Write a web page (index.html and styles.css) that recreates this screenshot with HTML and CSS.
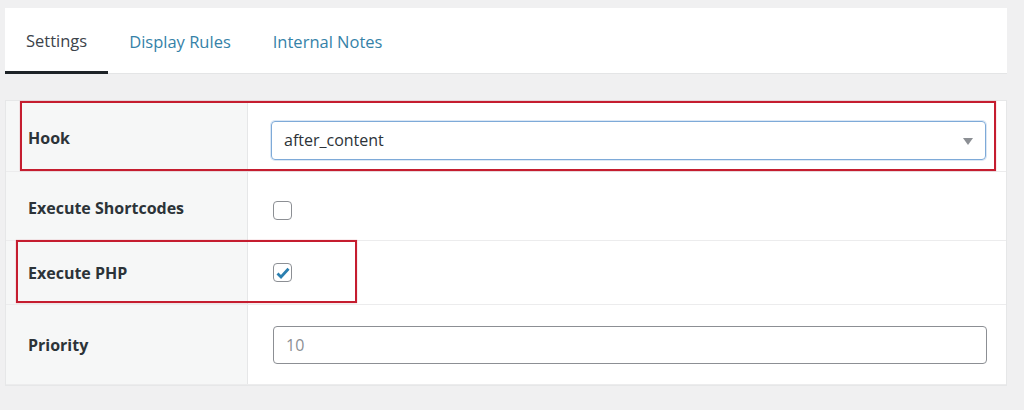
FILE: index.html
```
<!DOCTYPE html>
<html lang="en">
<head>
    <meta charset="UTF-8">
    <title>Hook settings</title>
    <link rel="stylesheet" href="styles.css">
</head>
<body>
    <div class="wrap">
        <ul class="tabs">
            <li class="tab active">Settings</li>
            <li class="tab">Display Rules</li>
            <li class="tab">Internal Notes</li>
        </ul>

        <div class="panel">
            <div class="row row-hook">
                <div class="label">Hook</div>
                <div class="field">
                    <div class="select">
                        <span>after_content</span>
                        <span class="caret"></span>
                    </div>
                </div>
            </div>
            <div class="row row-short">
                <div class="label">Execute Shortcodes</div>
                <div class="field">
                    <span class="check"></span>
                </div>
            </div>
            <div class="row row-php">
                <div class="label">Execute PHP</div>
                <div class="field">
                    <span class="check">
                        <svg width="14" height="12" viewBox="0 0 14 12"><path d="M1.5 6.5 L5 10 L12.5 1.8" fill="none" stroke="#2a7fb0" stroke-width="2.8"/></svg>
                    </span>
                </div>
            </div>
            <div class="row row-prio">
                <div class="label">Priority</div>
                <div class="field">
                    <div class="input">10</div>
                </div>
            </div>

            <!-- highlight marks -->
            <div class="mark mark-hook"></div>
            <div class="mark mark-php"></div>
        </div>
    </div>
</body>
</html>
```

FILE: styles.css
```
* {
    margin: 0;
    padding: 0;
    box-sizing: border-box;
    list-style: none;
}

body {
    background: #f0f0f1;
    font-family: "Open Sans", "Liberation Sans", sans-serif;
    color: #1d2327;
}

.wrap {
    width: 1002px;
    margin-left: 5px;
    padding-top: 8px;
}

.tabs {
    display: flex;
    height: 66px;
    background: #fff;
    border-bottom: 1px solid #e4e5e6;
}

.tab {
    font-size: 16.5px;
    line-height: 68px;
    padding: 0 21px;
    color: #3582a8;
}

.tab.active {
    color: #3c434a;
    border-bottom: 3px solid #1d2327;
    line-height: 66px;
    margin-bottom: -1px;
}

.panel {
    position: relative;
    margin-top: 26px;
    background: #fff;
    border: 1px solid #e6e7e8;
}

.row {
    display: flex;
    border-bottom: 1px solid #ececed;
}

.row:last-of-type {
    border-bottom: 0;
}

.row-hook { height: 71px; }
.row-short { height: 69px; }
.row-php { height: 64px; }
.row-prio { height: 80px; }

.label {
    width: 242px;
    flex-shrink: 0;
    display: flex;
    align-items: center;
    padding-left: 22px;
    background: #f6f7f7;
    border-right: 1px solid #e6e7e8;
    font-size: 16px;
    font-weight: 700;
    color: #2c3338;
}

.row-hook .label,
.row-short .label {
    padding-top: 4px;
}

.field {
    flex: 1;
    display: flex;
    align-items: center;
    padding-left: 23px;
    padding-right: 21px;
}

.row-hook .field {
    padding-top: 8px;
}

.row-short .field {
    padding-top: 8px;
}

.select {
    width: 715px;
    height: 39px;
    border: 1px solid #7eaad8;
    border-radius: 4px;
    box-shadow: 0 0 0 1px #dbe7f5;
    display: flex;
    align-items: center;
    justify-content: space-between;
    padding: 0 12px 0 12px;
    font-size: 16px;
    color: #2c3338;
}

.caret {
    width: 0;
    height: 0;
    border-left: 5px solid transparent;
    border-right: 5px solid transparent;
    border-top: 7px solid #8c8f94;
    margin-top: 2px;
}

.check {
    width: 19px;
    height: 19px;
    margin-left: 2px;
    border: 1.5px solid #8c8f94;
    border-radius: 4px;
    display: flex;
    align-items: center;
    justify-content: center;
    background: #fff;
}

.input {
    width: 714px;
    height: 38px;
    margin-left: 2px;
    border: 1.5px solid #8c8f94;
    border-radius: 4px;
    display: flex;
    align-items: center;
    padding-left: 12px;
    font-size: 16px;
    color: #8c8f94;
}

.mark {
    position: absolute;
    border: 2px solid #c51d2f;
    box-shadow: 0 0 1px rgba(197, 29, 47, 0.5);
}

.mark-hook {
    left: 14px;
    top: 0;
    width: 976px;
    height: 70px;
}

.mark-php {
    left: 10px;
    top: 139px;
    width: 341px;
    height: 63px;
}
```
